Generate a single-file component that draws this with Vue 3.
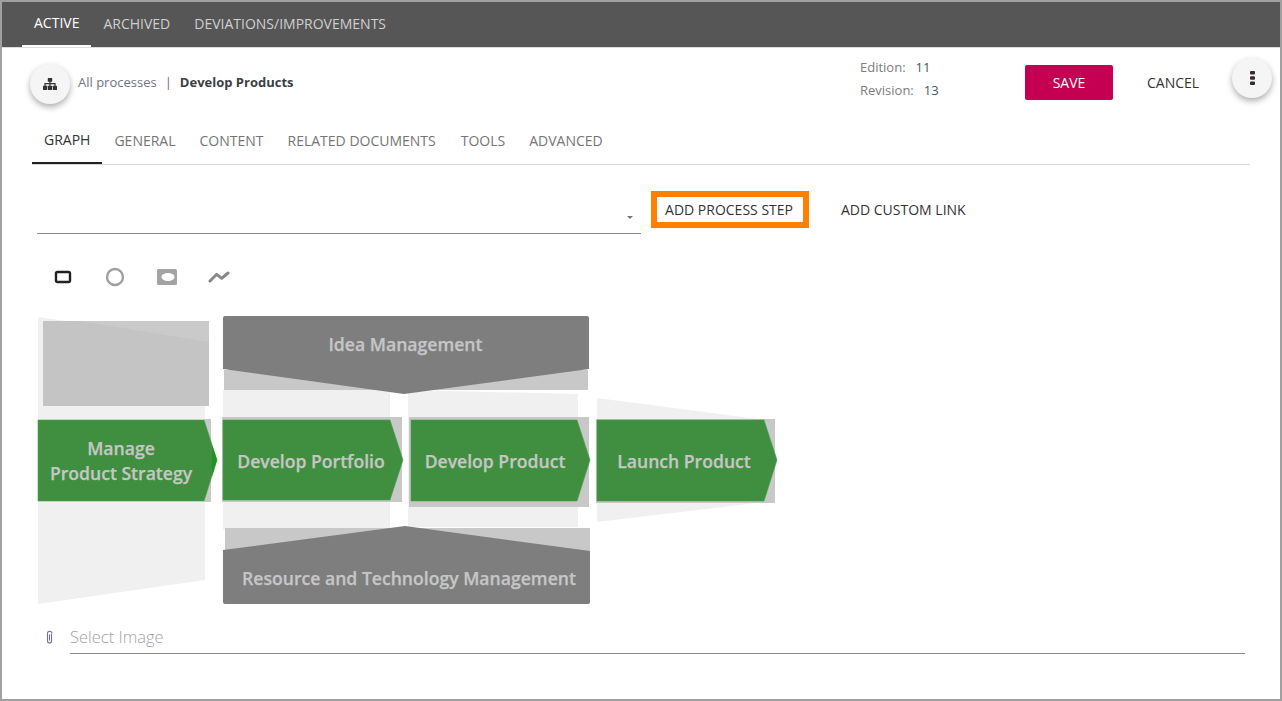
<template>
  <div class="frame">
    <nav class="topbar">
      <a v-for="t in topTabs" :key="t" class="top-tab" :class="{ active: t === 'ACTIVE' }">{{ t }}</a>
    </nav>

    <section class="content">
      <div class="head">
        <button class="fab org">
          <svg width="14" height="12" viewBox="0 0 14 12">
            <path fill="none" stroke="#333" stroke-width="1.2" d="M7 3v5M2 8V5.6h10V8" />
            <rect x="4.8" y="0" width="4.4" height="3.8" rx=".5" fill="#333" />
            <rect x="0" y="7.8" width="4.2" height="4.2" rx=".5" fill="#333" />
            <rect x="4.9" y="7.8" width="4.2" height="4.2" rx=".5" fill="#333" />
            <rect x="9.8" y="7.8" width="4.2" height="4.2" rx=".5" fill="#333" />
          </svg>
        </button>
        <div class="crumbs">
          <span>All processes</span>
          <span class="sep">|</span>
          <b>Develop Products</b>
        </div>
        <div class="meta">
          <div><span class="meta-key">Edition:</span><span class="meta-val">11</span></div>
          <div><span class="meta-key">Revision:</span><span class="meta-val">13</span></div>
        </div>
        <button class="save">SAVE</button>
        <button class="cancel">CANCEL</button>
        <button class="fab more">
          <svg width="5" height="14" viewBox="0 0 5 14">
            <rect width="5" height="3.6" y="0" rx="1" fill="#3a2a2a" />
            <rect width="5" height="3.6" y="5.2" rx="1" fill="#3a2a2a" />
            <rect width="5" height="3.6" y="10.4" rx="1" fill="#3a2a2a" />
          </svg>
        </button>
      </div>

      <div class="tabs">
        <a v-for="t in tabs" :key="t" class="tab" :class="{ active: t === 'GRAPH' }">{{ t }}</a>
      </div>

      <div class="toolbar">
        <div class="select"><i class="caret"></i></div>
        <button class="add-step">ADD PROCESS STEP</button>
        <button class="add-link">ADD CUSTOM LINK</button>
      </div>

      <div class="tools">
        <svg width="184" height="20" viewBox="0 0 184 20">
          <rect x="10" y="5" width="14" height="10" rx="1.5" fill="none" stroke="#222" stroke-width="2.4" />
          <circle cx="69" cy="10" r="8" fill="none" stroke="#a0a0a0" stroke-width="2.4" />
          <rect x="111" y="2" width="20" height="16" rx="1.5" fill="#a3a3a3" />
          <ellipse cx="122" cy="10" rx="6.6" ry="4" fill="#fff" />
          <path d="M164 14l6.7-6.7 5 4 6.3-5.3" fill="none" stroke="#888" stroke-width="3" stroke-linecap="round" stroke-linejoin="round" />
        </svg>
      </div>

      <svg class="graph" width="760" height="292" viewBox="32 314 760 292">
        <!-- pale highlight areas -->
        <g fill="#f0f0f0">
          <polygon points="38,317 205,340 205,580 38,604" />
          <rect x="223" y="390" width="167" height="140" />
          <polygon points="408,390 578,394 578,527 408,527" />
          <polygon points="597,398 765,420 765,502 597,522" />
        </g>

        <rect x="43" y="321" width="166" height="85" fill="#c4c4c4" />
        <polygon points="80,321 209,321 209,342" fill="#cacaca" />

        <g fill="#c8c8c8">
          <rect x="204" y="419" width="7" height="83" />
          <rect x="222" y="417" width="180" height="85" />
          <rect x="409" y="417" width="180" height="90" />
          <rect x="596" y="419" width="179" height="84" />
          <rect x="224" y="370" width="364" height="20" />
          <rect x="225" y="528" width="365" height="23" />
        </g>

        <g fill="#408e40" stroke="#45a045" stroke-width=".6">
          <polygon points="38,420 204,420 217,460 204,501 38,501" />
          <polygon points="223,420 390,420 403,460 390,500 223,500" />
          <polygon points="411,420 577,420 590,460 577,501 411,501" />
          <polygon points="597,420 764,420 777,460 764,501 597,501" />
        </g>
        <polygon points="212,445 217,460 212,476" fill="#1c961c" />

        <g fill="#7e7e7e">
          <path d="M225 316H587a2 2 0 0 1 2 2V369L404 394 223 369V318a2 2 0 0 1 2-2z" />
          <path d="M223 550L405 526 590 551V602a2 2 0 0 1-2 2H225a2 2 0 0 1-2-2z" />
        </g>

        <g class="labels" text-anchor="middle">
          <text x="121" y="455">Manage</text>
          <text x="121" y="480">Product Strategy</text>
          <text x="311" y="468">Develop Portfolio</text>
          <text x="495" y="468">Develop Product</text>
          <text x="684" y="468">Launch Product</text>
          <text x="405.5" y="351">Idea Management</text>
          <text x="409" y="585">Resource and Technology Management</text>
        </g>
      </svg>

      <div class="file-row">
        <svg class="clip" width="9" height="14" viewBox="0 0 9 14">
          <path d="M6.5 3.5v7a2 2 0 0 1-4 0V3a2.2 2.2 0 0 1 4.4 0M4.5 4v6" transform="translate(0 .5)" fill="none" stroke="#6f73a8" stroke-width="1.1" />
        </svg>
        <div class="file-input">Select Image</div>
      </div>
    </section>
  </div>
</template>

<script setup>
const topTabs = ['ACTIVE', 'ARCHIVED', 'DEVIATIONS/IMPROVEMENTS']
const tabs = ['GRAPH', 'GENERAL', 'CONTENT', 'RELATED DOCUMENTS', 'TOOLS', 'ADVANCED']
</script>

<style>
html, body {
  margin: 0;
  background: #fff;
}
</style>

<style scoped>
.frame {
  width: 1282px;
  height: 701px;
  box-sizing: border-box;
  border: 2px solid #a0a0a0;
  overflow: hidden;
  font-family: "Open Sans", sans-serif;
  font-size: 14px;
  background: #fff;
}

button {
  font-family: inherit;
  border: none;
  background: none;
  padding: 0;
}

.topbar {
  height: 45px;
  box-sizing: border-box;
  background: #565656;
  display: flex;
  padding-left: 20px;
  box-shadow: 0 1px 0 #ddd;
}

.top-tab {
  height: 45px;
  box-sizing: border-box;
  padding: 14px 12px 0;
  color: #cfcfcf;
  line-height: 16px;
}

.top-tab.active {
  color: #fff;
  padding-top: 13px;
  border-bottom: 2px solid #fff;
}

.content {
  padding: 0 30px;
}

.head {
  height: 73px;
  display: flex;
  align-items: center;
  position: relative;
}

.fab {
  width: 40px;
  height: 40px;
  border-radius: 50%;
  background: #f5f5f5;
  box-shadow: 0 3px 6px rgba(0, 0, 0, 0.32);
  display: flex;
  align-items: center;
  justify-content: center;
  flex: none;
}

.fab.org {
  margin-left: -2px;
}

.crumbs {
  margin-left: 8px;
  font-size: 13px;
  color: #6f7480;
  margin-top: -4px;
}

.crumbs b {
  color: #3b3f46;
}

.sep {
  margin: 0 8px;
  color: #7a5a9a;
}

.meta {
  margin-left: auto;
  font-size: 13px;
  line-height: 23px;
  width: 165px;
  margin-top: -9px;
}

.meta-key {
  color: #7d7d7d;
  margin-right: 10px;
}

.meta-val {
  color: #44586a;
}

.save {
  width: 88px;
  height: 35px;
  background: #c50052;
  color: #fff;
  border-radius: 2px;
  font-size: 14px;
  margin-top: -3px;
}

.cancel {
  color: #333;
  font-size: 14px;
  margin-left: 34px;
  width: 52px;
  margin-top: -3px;
}

.fab.more {
  margin-left: 33px;
  margin-right: -22px;
  margin-top: -12px;
}

.tabs {
  height: 44px;
  display: flex;
  border-bottom: 1px solid #d8d8d8;
  width: 1218px;
}

.tab {
  padding: 13px 12px 0;
  height: 44px;
  box-sizing: border-box;
  color: #757575;
  line-height: 16px;
}

.tab:nth-child(5) {
  margin-left: 1px;
}

.tab.active {
  color: #333;
  padding-top: 12px;
  border-bottom: 2px solid #222;
}

.toolbar {
  margin-top: 26px;
  display: flex;
  align-items: flex-start;
  padding-left: 5px;
  height: 43px;
}

.select {
  width: 604px;
  height: 43px;
  box-sizing: border-box;
  border-bottom: 1px solid #8a8a8a;
  position: relative;
}

.caret {
  position: absolute;
  right: 8px;
  top: 25px;
  border: 3.5px solid transparent;
  border-top: 3.5px solid #777;
}

.add-step {
  margin-left: 10px;
  width: 158px;
  height: 37px;
  box-sizing: border-box;
  border: 6px solid #ff8000;
  padding-right: 2px;
  color: #333;
  font-size: 14px;
}

.add-link {
  margin-left: 32px;
  height: 37px;
  color: #333;
  font-size: 14px;
}

.tools {
  height: 20px;
  margin-top: 33px;
  padding-left: 14px;
}

.tools svg {
  display: block;
}

.graph {
  display: block;
  margin-top: 27px;
}

.labels {
  font-family: "Open Sans", sans-serif;
  font-weight: 600;
  font-size: 17.6px;
  fill: #c6c6c6;
  stroke: #c6c6c6;
  stroke-width: 0.25px;
}

.file-row {
  margin-top: 15px;
  display: flex;
  align-items: flex-start;
  padding-left: 12px;
}

.clip {
  margin-top: 9px;
  margin-right: 17px;
  margin-left: 1px;
}

.file-input {
  width: 1175px;
  height: 33px;
  margin-left: -1px;
  box-sizing: border-box;
  border-bottom: 1px solid #8a8a8a;
  font-size: 16.5px;
  line-height: 32px;
  color: #a79fa8;
  font-weight: 300;
}
</style>
